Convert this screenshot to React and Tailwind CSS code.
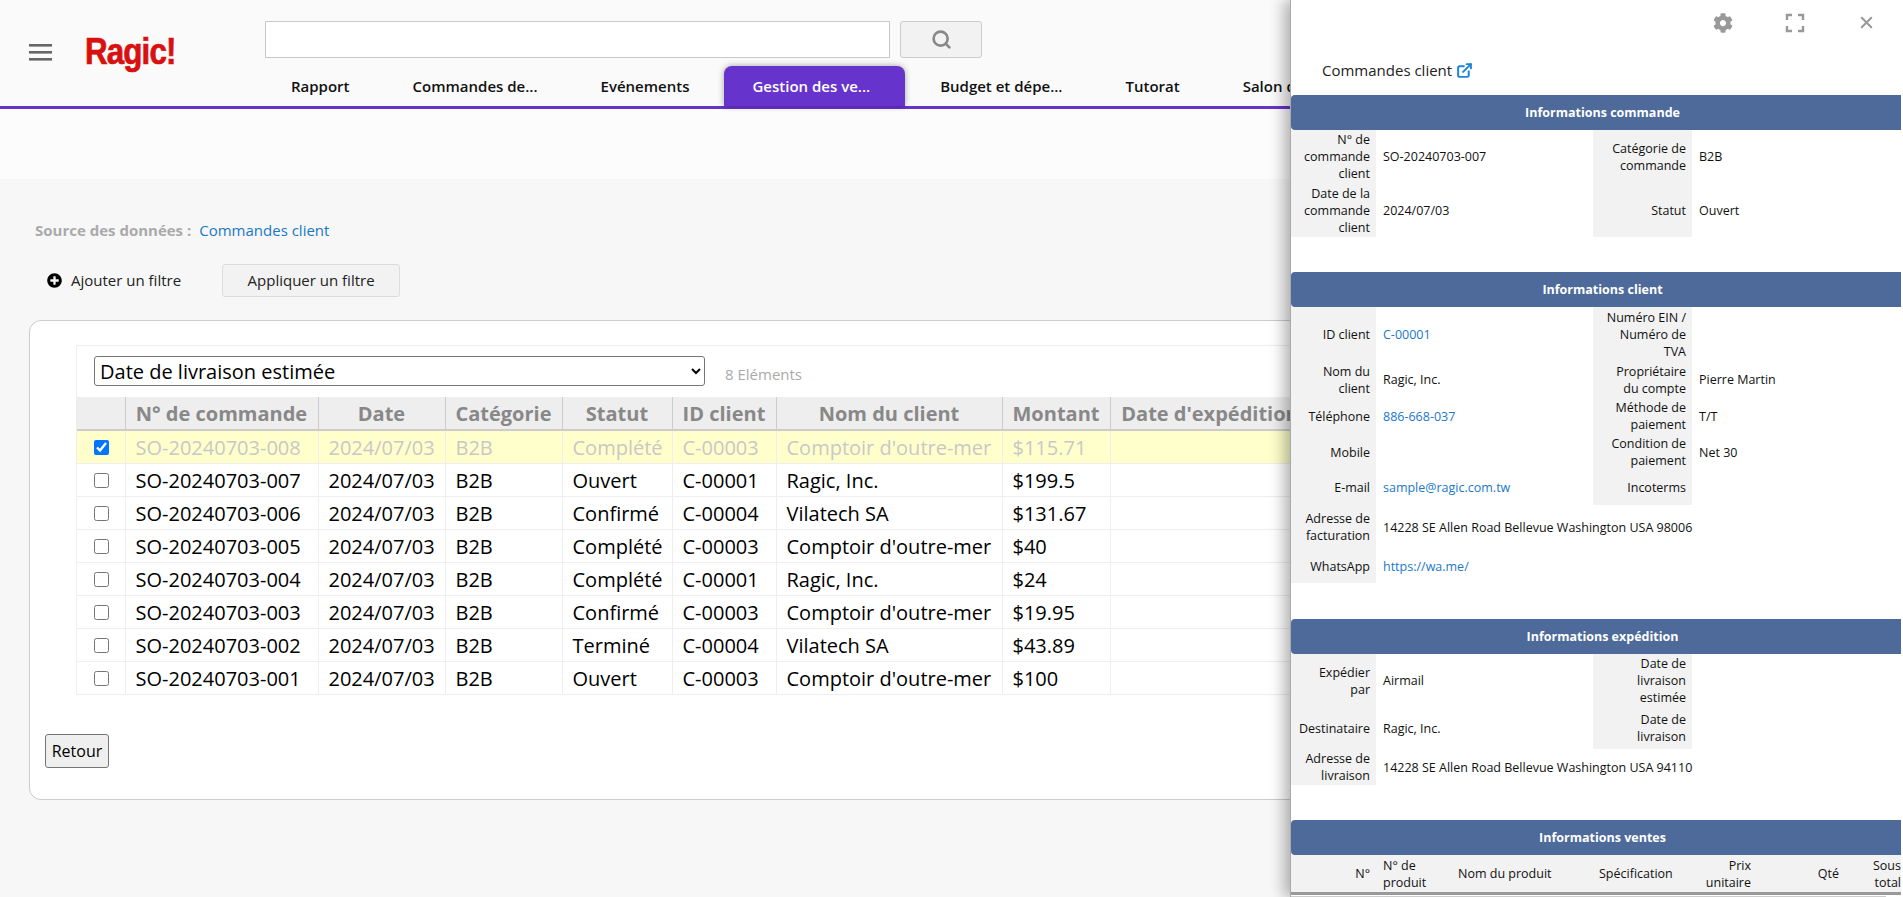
import React from 'react';
import { FaCog, FaPlusCircle } from 'react-icons/fa';
import { Search, ExternalLink, X } from 'lucide-react';

const tabs = ['Rapport', 'Commandes de...', 'Evénements', 'Gestion des ve...', 'Budget et dépe...', 'Tutorat', "Salon de l'emploi"];

const columns = [
  { label: '', width: 'w-[48px]' },
  { label: 'N° de commande', width: 'w-[193px]' },
  { label: 'Date', width: 'w-[127px]' },
  { label: 'Catégorie', width: 'w-[117px]' },
  { label: 'Statut', width: 'w-[110px]' },
  { label: 'ID client', width: 'w-[104px]' },
  { label: 'Nom du client', width: 'w-[226px]' },
  { label: 'Montant', width: 'w-[108px]' },
  { label: "Date d'expédition", width: 'w-[200px]' },
];

const orders = [
  ['SO-20240703-008', '2024/07/03', 'B2B', 'Complété', 'C-00003', "Comptoir d'outre-mer", '$115.71'],
  ['SO-20240703-007', '2024/07/03', 'B2B', 'Ouvert', 'C-00001', 'Ragic, Inc.', '$199.5'],
  ['SO-20240703-006', '2024/07/03', 'B2B', 'Confirmé', 'C-00004', 'Vilatech SA', '$131.67'],
  ['SO-20240703-005', '2024/07/03', 'B2B', 'Complété', 'C-00003', "Comptoir d'outre-mer", '$40'],
  ['SO-20240703-004', '2024/07/03', 'B2B', 'Complété', 'C-00001', 'Ragic, Inc.', '$24'],
  ['SO-20240703-003', '2024/07/03', 'B2B', 'Confirmé', 'C-00003', "Comptoir d'outre-mer", '$19.95'],
  ['SO-20240703-002', '2024/07/03', 'B2B', 'Terminé', 'C-00004', 'Vilatech SA', '$43.89'],
  ['SO-20240703-001', '2024/07/03', 'B2B', 'Ouvert', 'C-00003', "Comptoir d'outre-mer", '$100'],
];

const Field = ({ label, value, link }) => (
  <>
    <div className="flex items-center justify-end bg-[#f2f2f2] pr-[6px] text-right whitespace-pre-line">{label}</div>
    <div className={`flex items-center pl-[7px] whitespace-nowrap ${link ? 'text-[#1a78c8]' : ''}`}>{value}</div>
  </>
);

const FormRow = ({ height, left, right }) => (
  <div className={`grid grid-cols-[85px_217px_99px_209px] ${height}`}>
    <Field {...left} />
    {right ? <Field {...right} /> : null}
  </div>
);

const SectionTitle = ({ children }) => (
  <div className="flex h-[35px] w-[610px] items-center justify-center rounded-l-[4px] bg-[#4d6a9a] pl-[13px] text-[12.5px] font-bold text-white">
    {children}
  </div>
);

const OrderPanel = () => (
  <aside className="absolute top-0 right-0 h-full w-[613px] overflow-hidden border-l border-[#aaaaaa] bg-white text-[12.5px] leading-[17px] text-[#111] shadow-[-6px_0_14px_rgba(0,0,0,0.3)]">
    <div className="flex h-[46px] items-center justify-end gap-[52px] pr-[27px] pb-[1px] text-[#999]">
      <FaCog className="h-[20px] w-[20px]" />
      <svg className="h-[20px] w-[20px]" viewBox="0 0 20 20" fill="none" stroke="currentColor" strokeWidth="2.4">
        <path d="M2 7V2h5M13 2h5v5M18 13v5h-5M7 18H2v-5" />
      </svg>
      <X className="h-[19px] w-[19px]" strokeWidth={2.6} />
    </div>
    <div className="flex h-[49px] items-center gap-[4px] pb-[1px] pl-[31px] text-[15px] text-[#222]">
      Commandes client
      <ExternalLink className="h-[17px] w-[17px] text-[#1a86d8]" strokeWidth={2.8} />
    </div>

    <SectionTitle>Informations commande</SectionTitle>
    <FormRow height="h-[53px]" left={{ label: 'N° de\ncommande\nclient', value: 'SO-20240703-007' }} right={{ label: 'Catégorie de\ncommande', value: 'B2B' }} />
    <FormRow height="h-[54px]" left={{ label: 'Date de la\ncommande\nclient', value: '2024/07/03' }} right={{ label: 'Statut', value: 'Ouvert' }} />

    <div className="mt-[35px]"><SectionTitle>Informations client</SectionTitle></div>
    <FormRow height="h-[54px]" left={{ label: 'ID client', value: 'C-00001', link: true }} right={{ label: 'Numéro EIN /\nNuméro de\nTVA', value: '' }} />
    <FormRow height="h-[37px]" left={{ label: 'Nom du\nclient', value: 'Ragic, Inc.' }} right={{ label: 'Propriétaire\ndu compte', value: 'Pierre Martin' }} />
    <FormRow height="h-[36px]" left={{ label: 'Téléphone', value: '886-668-037', link: true }} right={{ label: 'Méthode de\npaiement', value: 'T/T' }} />
    <FormRow height="h-[36px]" left={{ label: 'Mobile', value: '' }} right={{ label: 'Condition de\npaiement', value: 'Net 30' }} />
    <FormRow height="h-[35px]" left={{ label: 'E-mail', value: 'sample@ragic.com.tw', link: true }} right={{ label: 'Incoterms', value: '' }} />
    <FormRow height="h-[44px]" left={{ label: 'Adresse de\nfacturation', value: '14228 SE Allen Road Bellevue Washington USA 98006' }} />
    <FormRow height="h-[34px]" left={{ label: 'WhatsApp', value: 'https://wa.me/', link: true }} />

    <div className="mt-[36px]"><SectionTitle>Informations expédition</SectionTitle></div>
    <FormRow height="h-[53px]" left={{ label: 'Expédier\npar', value: 'Airmail' }} right={{ label: 'Date de\nlivraison\nestimée', value: '' }} />
    <FormRow height="h-[42px]" left={{ label: 'Destinataire', value: 'Ragic, Inc.' }} right={{ label: 'Date de\nlivraison', value: '' }} />
    <FormRow height="h-[36px]" left={{ label: 'Adresse de\nlivraison', value: '14228 SE Allen Road Bellevue Washington USA 94110' }} />

    <div className="mt-[35px]"><SectionTitle>Informations ventes</SectionTitle></div>
    <div className="h-[40px] w-[610px] overflow-hidden border-b-[3px] border-[#999] bg-[#f2f2f2]">
      <div className="grid h-[37px] w-[616px] grid-cols-[85px_82px_141px_85px_67px_88px_62px] items-center whitespace-pre-line">
        <div className="pr-[6px] text-right">N°</div>
        <div className="pl-[7px]">{'N° de\nproduit'}</div>
        <div>Nom du produit</div>
        <div className="whitespace-nowrap">Spécification</div>
        <div className="text-right">{'Prix\nunitaire'}</div>
        <div className="text-right">Qté</div>
        <div className="text-right">{'Sous\ntotal'}</div>
      </div>
    </div>
    <div className="mt-[1px] h-[3px] w-[595px] bg-[#cccccc]" />
  </aside>
);

export default function App() {
  return (
    <div className="relative h-screen overflow-hidden bg-[#f7f7f7] font-['Open_Sans',sans-serif] text-black">
      <header className="flex h-[109px] border-b-[3px] border-[#6633cc] bg-[#fafafa]">
        <svg className="mt-[44px] ml-[29px] h-[17px] w-[23px] text-[#666]" viewBox="0 0 23 17" fill="currentColor">
          <rect y="0" width="23" height="2.6" />
          <rect y="7" width="23" height="2.6" />
          <rect y="14" width="23" height="2.6" />
        </svg>
        <div className="mt-[31px] ml-[33px] w-[180px] origin-left scale-x-[0.87] font-['Liberation_Sans',sans-serif] text-[36px] leading-[42px] font-bold tracking-[-1px] text-[#d91010] [-webkit-text-stroke:0.7px_#d91010]">
          Ragic!
        </div>
        <div className="flex flex-col">
          <div className="mt-[21px] flex gap-[10px]">
            <div className="h-[37px] w-[625px] border-[1.5px] border-[#c8c8c8] bg-white" />
            <button className="flex h-[37px] w-[82px] items-center justify-center rounded-[3px] border border-[#ccc] bg-[#f2f2f2] text-[#888]">
              <Search className="h-[21px] w-[21px]" strokeWidth={3} />
            </button>
          </div>
          <nav className="mt-[8px] -ml-[2px] flex h-[40px] w-[1100px] gap-[7px] text-[15px] font-semibold whitespace-nowrap">
            {tabs.map((tab) => (
              <div
                key={tab}
                className={`flex items-center rounded-t-[8px] pl-[28px] ${tab.startsWith('Gestion') ? 'bg-[#6633cc] pr-[35px] text-white shadow-[0_0_6px_rgba(0,0,0,0.35)]' : 'pr-[28px] text-[#111]'}`}
              >
                {tab}
              </div>
            ))}
          </nav>
        </div>
      </header>

      <div className="h-[70px] bg-[#fcfcfc]" />

      <main className="px-[29px]">
        <div className="mt-[41px] flex h-[20px] items-center pl-[6px] text-[15px]">
          <span className="font-bold text-[#aaa]">Source des données :</span>
          <span className="ml-[8px] text-[#1a78c8]">Commandes client</span>
        </div>
        <div className="mt-[24px] flex h-[33px] items-center pl-[18px] text-[15px] text-[#222]">
          <FaPlusCircle className="h-[15px] w-[15px] text-black" />
          <span className="ml-[9px]">Ajouter un filtre</span>
          <button className="ml-[41px] h-[33px] w-[178px] rounded-[3px] border border-[#ddd] bg-[#f2f2f2] text-[15px]">Appliquer un filtre</button>
        </div>

        <section className="mt-[23px] h-[480px] rounded-[12px] border border-[#ccc] bg-white pt-[24px] pl-[15px]">
          <div className="ml-[31px] w-[1300px] overflow-hidden border-t border-l border-[#eee]">
            <div className="flex h-[51px] items-start pt-[10px] pl-[17px]">
              <select className="h-[30px] w-[611px] rounded-[3px] border border-[#767676] bg-white pl-[1px] text-[20px] leading-[26px]">
                <option>Date de livraison estimée</option>
              </select>
              <span className="ml-[20px] pt-[7px] text-[15px] text-[#aaa]">8 Eléments</span>
            </div>
            <table className="w-[1233px] table-fixed border-collapse text-[20px]">
              <thead>
                <tr className="h-[33px] border-b-2 border-[#ccc] bg-[#eee]">
                  {columns.map((col) => (
                    <th key={col.label} className={`${col.width} overflow-hidden border-r border-[#ccc] px-[8px] pt-[1px] text-center font-bold whitespace-nowrap text-[#888]`}>
                      {col.label}
                    </th>
                  ))}
                </tr>
              </thead>
              <tbody>
                {orders.map((order, ind) => (
                  <tr key={order[0]} className={`h-[33px] border-b border-[#eee] ${ind === 0 ? 'bg-[#ffffcc] text-[#c8c8c8]' : ''}`}>
                    <td className="border-r border-[#eee] pl-[17px]">
                      <input type="checkbox" defaultChecked={ind === 0} className="block h-[15px] w-[15px]" />
                    </td>
                    {order.map((cell) => (
                      <td key={cell} className="overflow-hidden border-r border-[#eee] pt-[2px] pl-[10px] whitespace-nowrap">{cell}</td>
                    ))}
                    <td />
                  </tr>
                ))}
              </tbody>
            </table>
          </div>
          <button className="mt-[39px] h-[34px] w-[64px] rounded-[3px] border border-[#767676] bg-[#efefef] text-[16px]">Retour</button>
        </section>
      </main>

      <OrderPanel />
    </div>
  );
}
